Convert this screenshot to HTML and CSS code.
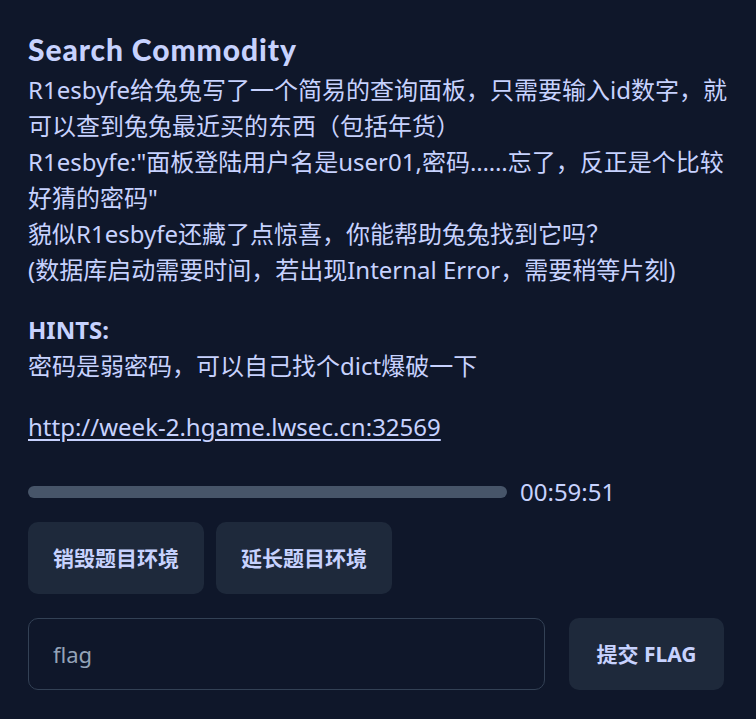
FILE: index.html
```html
<!DOCTYPE html>
<html lang="zh-CN">
<head>
<meta charset="utf-8">
<title>Search Commodity</title>
<link rel="stylesheet" href="styles.css">
</head>
<body>
<main class="challenge">
  <h1 class="title">Search Commodity</h1>
  <div class="desc">
    <p>R1esbyfe给兔兔写了一个简易的查询面板，只需要输入id数字，就可以查到兔兔最近买的东西（包括年货）</p>
    <p>R1esbyfe:"面板登陆用户名是user01,密码……忘了，反正是个比较好猜的密码"</p>
    <p>貌似R1esbyfe还藏了点惊喜，你能帮助兔兔找到它吗？</p>
    <p>(数据库启动需要时间，若出现Internal Error，需要稍等片刻)</p>
  </div>
  <div class="hints">
    <p class="hints-title">HINTS:</p>
    <p>密码是弱密码，可以自己找个dict爆破一下</p>
  </div>
  <a class="link" href="#">http://week-2.hgame.lwsec.cn:32569</a>
  <div class="timer">
    <div class="bar"></div>
    <span class="time">00:59:51</span>
  </div>
  <div class="actions">
    <button class="btn">销毁题目环境</button>
    <button class="btn">延长题目环境</button>
  </div>
  <form class="submit-row">
    <input class="flag-input" type="text" placeholder="flag">
    <button class="btn submit" type="button">提交 FLAG</button>
  </form>
</main>
</body>
</html>
```
FILE: styles.css
```css
html, body {
  margin: 0;
  padding: 0;
  background: #0f172a;
}
body {
  color: #c7d2fe;
  font-family: "Noto Sans", "Noto Sans CJK SC", sans-serif;
  font-size: 24px;
  line-height: 36px;
}
.challenge {
  padding: 30px 32px 20px 28px;
  display: flex;
  flex-direction: column;
}
.title {
  margin: 0 0 4px;
  font-family: "Lato", "Noto Sans", sans-serif;
  font-weight: 900;
  font-size: 30px;
  line-height: 38px;
  letter-spacing: 0.9px;
  color: #c7d2fe;
}
.desc {
  margin-right: -12px;
}
.desc p, .hints p {
  margin: 0;
}
.hints {
  margin-top: 24px;
}
.hints-title {
  font-weight: 700;
}
.link {
  margin-top: 25px;
  color: #c7d2fe;
  text-decoration: underline;
  text-underline-offset: 3px;
  align-self: flex-start;
}
.timer {
  margin-top: 29px;
  display: flex;
  align-items: center;
  gap: 13px;
  height: 36px;
}
.bar {
  width: 479px;
  height: 12px;
  border-radius: 6px;
  background: #475569;
}
.time {
  font-size: 24px;
  line-height: 36px;
}
.actions {
  margin-top: 12px;
  display: flex;
  gap: 12px;
}
.btn {
  background: #1e293b;
  color: #c7d2fe;
  border: none;
  border-radius: 10px;
  font-family: "Noto Sans", "Noto Sans CJK SC", sans-serif;
  font-weight: 700;
  font-size: 21px;
  line-height: 28px;
  padding: 22px 0;
  width: 176px;
  cursor: pointer;
}
.submit-row {
  margin: 24px 0 0;
  display: flex;
  gap: 24px;
}
.flag-input {
  flex: 1;
  height: 72px;
  box-sizing: border-box;
  background: #0f172a;
  border: 1px solid #334155;
  border-radius: 10px;
  padding: 0 24px;
  color: #c7d2fe;
  font-family: "Noto Sans", "Noto Sans CJK SC", sans-serif;
  font-size: 22px;
  outline: none;
}
.flag-input::placeholder {
  color: #94a3b8;
}
.submit {
  width: 155px;
}
```
